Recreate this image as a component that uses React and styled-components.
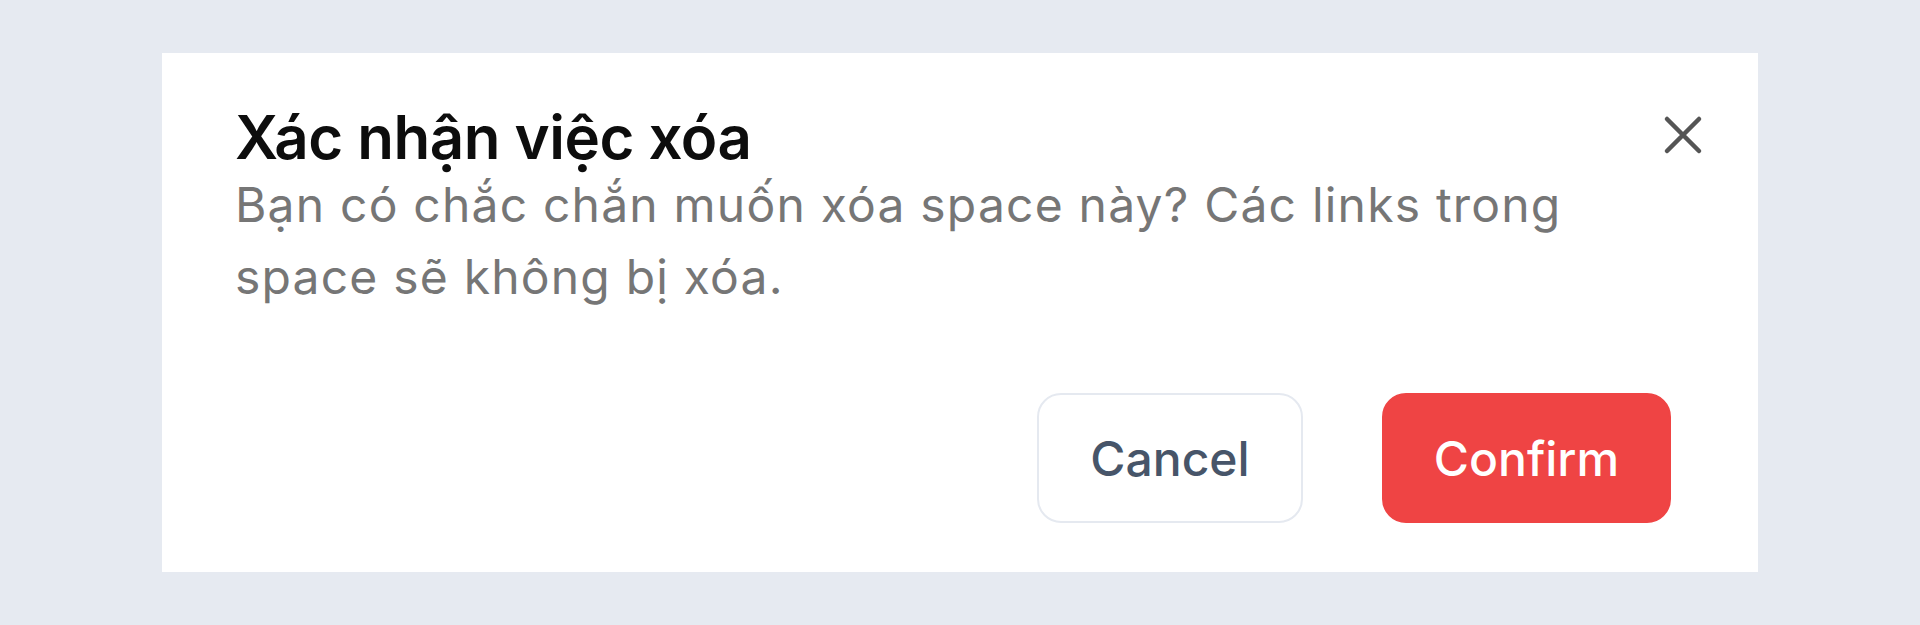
import React from "react";
import styled, { createGlobalStyle } from "styled-components";

const GlobalStyle = createGlobalStyle`
  html, body {
    margin: 0;
    padding: 0;
    background: #e6eaf1;
    font-family: Inter, "Noto Sans", sans-serif;
  }
`;

const Page = styled.div`
  width: 1920px;
  height: 625px;
  display: flex;
  align-items: center;
  justify-content: center;
`;

const Dialog = styled.div`
  position: relative;
  box-sizing: border-box;
  width: 1596px;
  height: 519px;
  background: #ffffff;
  padding: 54px 87px 49px 73px;
  display: flex;
  flex-direction: column;
`;

const Header = styled.div`
  display: flex;
  flex-direction: column;
  max-width: 1380px;
`;

const Title = styled.h2`
  margin: 0;
  font-size: 60px;
  line-height: 60px;
  font-weight: 600;
  color: #0d0d0d;
  letter-spacing: -0.5px;
`;

const Description = styled.p`
  margin: 2px 0 0;
  font-size: 48px;
  line-height: 72px;
  font-weight: 400;
  letter-spacing: 1.2px;
  color: #767676;
`;

const CloseButton = styled.button`
  position: absolute;
  top: 50px;
  right: 43px;
  width: 64px;
  height: 64px;
  padding: 0;
  border: none;
  background: transparent;
  color: #555555;
  display: flex;
  align-items: center;
  justify-content: center;
  cursor: pointer;
`;

const Footer = styled.div`
  margin-top: auto;
  display: flex;
  justify-content: flex-end;
  gap: 79px;
`;

const Button = styled.button`
  box-sizing: border-box;
  width: ${(p) => (p.$danger ? "289px" : "266px")};
  height: 130px;
  padding: 0;
  border-radius: 24px;
  display: flex;
  align-items: center;
  justify-content: center;
  font-family: Inter, "Noto Sans", sans-serif;
  font-size: 48px;
  font-weight: 500;
  cursor: pointer;
  border: 2px solid ${(p) => (p.$danger ? "#ef4444" : "#e5e9f0")};
  background: ${(p) => (p.$danger ? "#ef4444" : "#ffffff")};
  color: ${(p) => (p.$danger ? "#ffffff" : "#475569")};
`;

const XIcon = () => (
  <svg width="64" height="64" viewBox="0 0 24 24" fill="none">
    <path
      d="M6 6L18 18M18 6L6 18"
      stroke="currentColor"
      strokeWidth="1.7"
      strokeLinecap="round"
    />
  </svg>
);

export default function App() {
  return (
    <>
      <GlobalStyle />
      <Page>
        <Dialog>
          <Header>
            <Title>Xác nhận việc xóa</Title>
            <Description>
              Bạn có chắc chắn muốn xóa space này? Các links trong space sẽ
              không bị xóa.
            </Description>
          </Header>
          <CloseButton aria-label="Close">
            <XIcon />
          </CloseButton>
          <Footer>
            <Button>Cancel</Button>
            <Button $danger>Confirm</Button>
          </Footer>
        </Dialog>
      </Page>
    </>
  );
}
